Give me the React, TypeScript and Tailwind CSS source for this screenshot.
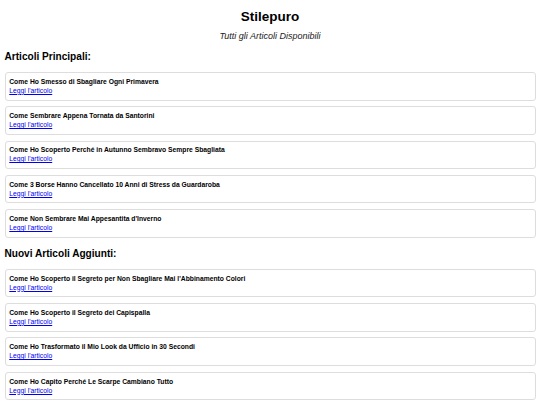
const principali = [
  "Come Ho Smesso di Sbagliare Ogni Primavera",
  "Come Sembrare Appena Tornata da Santorini",
  "Come Ho Scoperto Perché in Autunno Sembravo Sempre Sbagliata",
  "Come 3 Borse Hanno Cancellato 10 Anni di Stress da Guardaroba",
  "Come Non Sembrare Mai Appesantita d'Inverno",
];

const nuovi = [
  "Come Ho Scoperto il Segreto per Non Sbagliare Mai l'Abbinamento Colori",
  "Come Ho Scoperto il Segreto dei Capispalla",
  "Come Ho Trasformato il Mio Look da Ufficio in 30 Secondi",
  "Come Ho Capito Perché Le Scarpe Cambiano Tutto",
];

function ArticleCard({ title }: { title: string }) {
  return (
    <div className="border border-[#dddddd] rounded-[3px] bg-white px-[3.75px] py-[4.75px]">
      <h3 className="text-[6.75px] leading-[8px] font-bold text-black">{title}</h3>
      <a href="#" className="block mt-[1px] text-[6.75px] leading-[8px] text-[#0000ee] underline">
        Leggi l'articolo
      </a>
    </div>
  );
}

function Section({ heading, items }: { heading: string; items: string[] }) {
  return (
    <section>
      <h2 className="mt-[10px] text-[10.1px] leading-[12px] font-bold text-black">{heading}</h2>
      <div className="mt-[9px] flex flex-col gap-[5.83px]">
        {items.map((t) => (
          <ArticleCard key={t} title={t} />
        ))}
      </div>
    </section>
  );
}

export default function App() {
  return (
    <div
      className="min-h-[405px] bg-white px-[4.5px] text-black"
      style={{ fontFamily: '"Liberation Sans", Arial, sans-serif' }}
    >
      <header className="text-center">
        <h1 className="pt-[9px] text-[13.5px] leading-[16px] font-bold text-black">Stilepuro</h1>
        <p className="mt-[6px] text-[9px] leading-[10px] italic text-[#222]">
          Tutti gli Articoli Disponibili
        </p>
      </header>
      <Section heading="Articoli Principali:" items={principali} />
      <Section heading="Nuovi Articoli Aggiunti:" items={nuovi} />
    </div>
  );
}
